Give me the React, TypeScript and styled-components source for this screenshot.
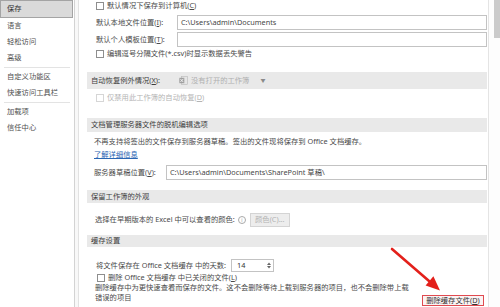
import React from "react";
import styled, { createGlobalStyle } from "styled-components";

const GlobalStyle = createGlobalStyle`
  html, body { margin: 0; padding: 0; background: #fff; }
  #root { width: 500px; height: 307px; }
`;

const Frame = styled.div`
  position: relative;
  width: 500px;
  height: 307px;
  overflow: hidden;
  display: flex;
  background: #fff;
  font-family: "Noto Sans", "Noto Sans CJK SC", sans-serif;
  font-size: 7.3px;
  line-height: 1;
  color: #4a4a4a;
`;

const Sidebar = styled.nav`
  width: 75px;
  flex: none;
  box-sizing: border-box;
  border-right: 1px solid #d3d3d3;
  display: flex;
  flex-direction: column;
`;

const NavItem = styled.div<{ $active?: boolean }>`
  height: ${(p) => (p.$active ? 18 : 16)}px;
  box-sizing: border-box;
  display: flex;
  align-items: center;
  padding-left: 7px;
  margin-right: 1px;
  white-space: nowrap;
  color: #505050;
  ${(p) =>
    p.$active &&
    `background: #dadada; border: 1px solid #a4a4a4; padding-left: 6px; color: #333;`}
`;

const NavSep = styled.div`
  height: 3px;
  display: flex;
  align-items: center;
  padding: 0 4px;
  &::after {
    content: "";
    flex: 1;
    height: 1px;
    background: #e3e3e3;
  }
`;

const Gutter = styled.div`
  width: 4px;
  flex: none;
  box-sizing: border-box;
  background: #f8f8f8;
  border-right: 1px solid #e2e2e2;
`;

const Content = styled.main`
  flex: 1;
  min-width: 0;
  display: flex;
  flex-direction: column;
  padding-right: 1px;
`;

const Scrollbar = styled.div`
  width: 12px;
  flex: none;
  box-sizing: border-box;
  border-left: 1px solid #e4e4e4;
  display: flex;
  justify-content: flex-end;
  background: #fdfdfd;
`;

const Thumb = styled.div`
  width: 6px;
  height: 38px;
  background: #cbcbcb;
`;

const Row = styled.div<{ $h: number; $mt?: number; $indent?: number }>`
  display: flex;
  align-items: center;
  flex: none;
  height: ${(p) => p.$h}px;
  margin-top: ${(p) => p.$mt ?? 0}px;
  padding-left: ${(p) => p.$indent ?? 16}px;
  white-space: nowrap;
`;

const SectionHeader = styled.div<{ $h: number; $mt: number }>`
  display: flex;
  align-items: center;
  flex: none;
  height: ${(p) => p.$h}px;
  margin-top: ${(p) => p.$mt}px;
  margin-left: 8px;
  padding-left: 4px;
  background: #e9e9e9;
  color: #3d3d3d;
  white-space: nowrap;
`;

const Check = styled.span<{ $disabled?: boolean }>`
  width: 6px;
  height: 6px;
  flex: none;
  border: 1px solid ${(p) => (p.$disabled ? "#d6d6d6" : "#8e8e8e")};
  background: #fff;
  margin-right: 3px;
`;

const Label = styled.span<{ $w?: number; $disabled?: boolean }>`
  flex: none;
  ${(p) => (p.$w ? `width: ${p.$w}px;` : "")}
  color: ${(p) => (p.$disabled ? "#b4b4b4" : "inherit")};
`;

const TextBox = styled.div`
  flex: 1;
  height: 15px;
  box-sizing: border-box;
  border: 1px solid #c3c3c3;
  background: #fff;
  display: flex;
  align-items: center;
  padding-left: 3px;
  color: #474747;
  overflow: hidden;
`;

const Combo = styled.div`
  display: flex;
  align-items: center;
  margin-left: 12px;
  color: #b0b0b0;
  gap: 3px;
`;

const Caret = styled.span`
  margin-left: 8px;
  font-size: 5px;
  color: #8a8a8a;
`;

const Link = styled.a`
  color: #2a66b3;
  text-decoration: underline;
`;

const InfoIcon = styled.span`
  width: 6px;
  height: 6px;
  border: 1px solid #a9a9a9;
  border-radius: 50%;
  margin-left: 3px;
  font-size: 5px;
  color: #9a9a9a;
  display: inline-flex;
  align-items: center;
  justify-content: center;
  flex: none;
`;

const GhostButton = styled.div`
  width: 40px;
  height: 14px;
  margin-left: 4px;
  box-sizing: border-box;
  border: 1px solid #d4d4d4;
  background: #ededed;
  color: #b3b3b3;
  display: flex;
  align-items: center;
  justify-content: center;
`;

const Spin = styled.div`
  width: 43px;
  height: 13px;
  margin-left: 5px;
  box-sizing: border-box;
  border: 1px solid #c3c3c3;
  display: flex;
  align-items: center;
  padding-left: 5px;
  color: #333;
`;

const SpinArrows = styled.div`
  margin-left: auto;
  margin-right: 2px;
  display: flex;
  flex-direction: column;
  gap: 1px;
`;

const DescBlock = styled.div`
  display: flex;
  flex: none;
  padding-left: 16px;
  padding-right: 3px;
`;

const Desc = styled.p`
  margin: 0;
  line-height: 9.5px;
  white-space: nowrap;
  flex: 1;
`;

const DangerButton = styled.div`
  flex: none;
  align-self: flex-start;
  margin-top: 12px;
  width: 62px;
  height: 11px;
  box-sizing: border-box;
  border: 1.5px solid #e04a50;
  background: #fcf3f3;
  color: #333;
  display: flex;
  align-items: center;
  justify-content: center;
  white-space: nowrap;
`;

const Annotation = styled.svg`
  position: absolute;
  left: 0;
  top: 0;
  pointer-events: none;
`;

const ExcelIcon = () => (
  <svg width="9" height="9" viewBox="0 0 9 9">
    <rect x="2.5" y="0.5" width="6" height="8" fill="#e6e6e6" stroke="#b9b9b9" strokeWidth="0.6" />
    <rect x="0.3" y="1.8" width="5" height="5.4" fill="#9e9e9e" />
    <path d="M1.3 2.9 L4.3 6.1 M4.3 2.9 L1.3 6.1" stroke="#fff" strokeWidth="0.8" />
  </svg>
);

const SpinArrow = ({ up }: { up?: boolean }) => (
  <svg width="4" height="3" viewBox="0 0 4 3">
    <path d={up ? "M0 3 L2 0.5 L4 3 Z" : "M0 0 L2 2.5 L4 0 Z"} fill="#666" />
  </svg>
);

export default function App() {
  return (
    <>
      <GlobalStyle />
      <Frame>
        <Sidebar>
          <NavItem $active>保存</NavItem>
          <NavItem>语言</NavItem>
          <NavItem>轻松访问</NavItem>
          <NavItem>高级</NavItem>
          <NavSep />
          <NavItem>自定义功能区</NavItem>
          <NavItem>快速访问工具栏</NavItem>
          <NavSep />
          <NavItem>加载项</NavItem>
          <NavItem>信任中心</NavItem>
        </Sidebar>
        <Gutter />
        <Content>
          <Row $h={11} $indent={17}>
            <Check />
            <Label>默认情况下保存到计算机(<u>C</u>)</Label>
          </Row>
          <Row $h={15} $mt={4} $indent={17}>
            <Label $w={81}>默认本地文件位置(<u>I</u>):</Label>
            <TextBox>C:\Users\admin\Documents</TextBox>
          </Row>
          <Row $h={15} $mt={2} $indent={17}>
            <Label $w={81}>默认个人模板位置(<u>T</u>):</Label>
            <TextBox />
          </Row>
          <Row $h={12} $mt={1} $indent={17}>
            <Check />
            <Label>编辑逗号分隔文件(*.csv)时显示数据丢失警告</Label>
          </Row>

          <SectionHeader $h={17} $mt={12}>
            <Label $w={76}>自动恢复例外情况(<u>X</u>):</Label>
            <Combo>
              <ExcelIcon />
              <span>没有打开的工作簿</span>
              <Caret>▼</Caret>
            </Combo>
          </SectionHeader>
          <Row $h={12} $mt={3} $indent={17}>
            <Check $disabled />
            <Label $disabled>仅禁用此工作簿的自动恢复(<u>D</u>)</Label>
          </Row>

          <SectionHeader $h={14} $mt={14}>文档管理服务器文件的脱机编辑选项</SectionHeader>
          <Row $h={12} $mt={4} $indent={15}>
            不再支持将签出的文件保存到服务器草稿。签出的文件现将保存到 Office 文档缓存。
          </Row>
          <Row $h={12} $mt={1} $indent={15}>
            <Link>了解详细信息</Link>
          </Row>
          <Row $h={15} $mt={4} $indent={15}>
            <Label $w={72}>服务器草稿位置(<u>V</u>):</Label>
            <TextBox>C:\Users\admin\Documents\SharePoint 草稿\</TextBox>
          </Row>

          <SectionHeader $h={13} $mt={10}>保留工作簿的外观</SectionHeader>
          <Row $h={16} $mt={9} $indent={16}>
            <Label>选择在早期版本的 Excel 中可以查看的颜色:</Label>
            <InfoIcon>i</InfoIcon>
            <GhostButton>颜色(C)...</GhostButton>
          </Row>

          <SectionHeader $h={12} $mt={7}>缓存设置</SectionHeader>
          <Row $h={13} $mt={12} $indent={17}>
            <Label>将文件保存在 Office 文档缓存 中的天数:</Label>
            <Spin>
              14
              <SpinArrows>
                <SpinArrow up />
                <SpinArrow />
              </SpinArrows>
            </Spin>
          </Row>
          <Row $h={10} $mt={1} $indent={18}>
            <Check />
            <Label>删除 Office 文档缓存 中已关闭的文件(<u>L</u>)</Label>
          </Row>
          <DescBlock>
            <Desc>
              删除缓存中为更快速查看而保存的文件。这不会删除等待上载到服务器的项目，也不会删除带上载
              <br />
              错误的项目
            </Desc>
            <DangerButton>删除缓存文件(<u>D</u>)</DangerButton>
          </DescBlock>
        </Content>
        <Scrollbar>
          <Thumb />
        </Scrollbar>
        <Annotation width="500" height="307" viewBox="0 0 500 307">
          <path d="M392 249 L429.6 281.4" stroke="#e3201b" strokeWidth="2.6" strokeLinecap="round" />
          <polygon points="440,290.5 425.6,285.5 433.4,276.3" fill="#e3201b" />
        </Annotation>
      </Frame>
    </>
  );
}
